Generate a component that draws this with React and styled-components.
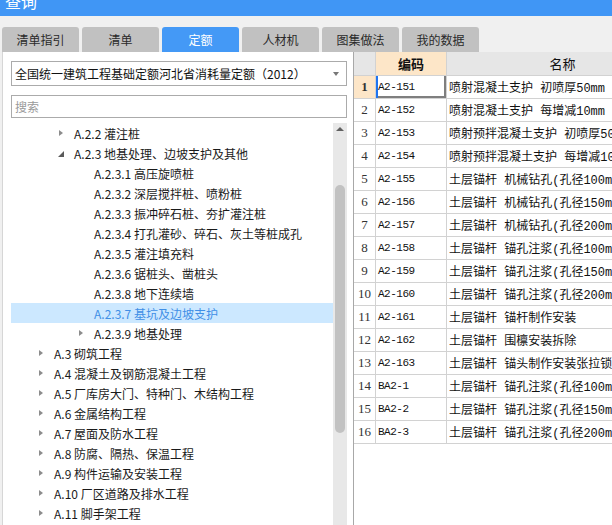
import React from "react";
import styled, { createGlobalStyle } from "styled-components";

const GlobalStyle = createGlobalStyle`
  body {
    margin: 0;
    background: #f0f0f0;
    overflow: hidden;
  }
`;

const Page = styled.div`
  width: 612px;
  height: 525px;
  overflow: hidden;
  display: flex;
  flex-direction: column;
  background: #f0f0f0;
  font-family: "Noto Sans CJK SC", "Liberation Sans", sans-serif;
`;

const TitleBar = styled.div`
  height: 16px;
  flex: none;
  background: #4096f5;
  overflow: hidden;
  padding-left: 5px;
  color: #fff;
  font-size: 16px;
`;

const TitleText = styled.span`
  display: block;
  line-height: 16px;
  margin-top: -7px;
`;

const TabBar = styled.div`
  flex: none;
  display: flex;
  gap: 3px;
  padding: 11px 0 0 2px;
`;

const Tab = styled.div`
  width: 77px;
  height: 25px;
  display: flex;
  align-items: center;
  justify-content: center;
  border-radius: 3px 3px 0 0;
  font-size: 12px;
  background: ${(p) => (p.$active ? "#4499f6" : "#c1c1c1")};
  color: ${(p) => (p.$active ? "#fff" : "#2a2a2a")};
`;

const Content = styled.div`
  flex: 1;
  min-height: 0;
  display: flex;
  padding-left: 2px;
`;

const LeftPanel = styled.div`
  width: 351px;
  box-sizing: border-box;
  background: #fff;
  border-left: 1px solid #d6d6d6;
  padding: 9px 0 0 8px;
  display: flex;
  flex-direction: column;
`;

const Dropdown = styled.div`
  width: 336px;
  height: 25px;
  box-sizing: border-box;
  border: 1px solid #ababab;
  display: flex;
  align-items: center;
  justify-content: space-between;
  padding: 0 7px 0 3px;
  font-size: 12px;
  color: #111;
`;

const DropArrow = styled.span`
  width: 0;
  height: 0;
  border-top: 4px solid #777;
  border-left: 3.5px solid transparent;
  border-right: 3.5px solid transparent;
`;

const Search = styled.input`
  width: 336px;
  height: 23px;
  box-sizing: border-box;
  margin: 9px 0 0;
  border: 1px solid #ababab;
  padding: 0 3px;
  font-family: inherit;
  font-size: 12px;
  outline: none;
  &::placeholder {
    color: #9a9a9a;
  }
`;

const TreeArea = styled.div`
  flex: 1;
  min-height: 0;
  margin-top: 5px;
  display: flex;
  padding-right: 6px;
`;

const TreeList = styled.div`
  flex: 1;
  overflow: hidden;
`;

const TreeRow = styled.div`
  height: 20px;
  display: flex;
  align-items: center;
  padding-left: ${(p) => 5 + p.$level * 20}px;
  font-size: 12px;
  white-space: nowrap;
  background: ${(p) => (p.$selected ? "#cce8ff" : "transparent")};
  color: ${(p) => (p.$selected ? "#3f8fe6" : "#1a1a1a")};
`;

const Slot = styled.span`
  width: 18px;
  height: 20px;
  flex: none;
  display: flex;
  align-items: center;
  justify-content: flex-start;
`;

const Closed = styled.span`
  margin-left: 3px;
  width: 0;
  height: 0;
  border-left: 4px solid #8c8c8c;
  border-top: 3.5px solid transparent;
  border-bottom: 3.5px solid transparent;
`;

const Open = styled.span`
  margin-left: 2px;
  margin-top: 2px;
  width: 0;
  height: 0;
  border-bottom: 6px solid #5a5a5a;
  border-left: 6px solid transparent;
`;

const ScrollTrack = styled.div`
  width: 14px;
  flex: none;
  background: #e8e8e8;
  display: flex;
  flex-direction: column;
  align-items: center;
`;

const ScrollUp = styled.span`
  margin-top: 4px;
  width: 0;
  height: 0;
  border-bottom: 4px solid #606060;
  border-left: 4px solid transparent;
  border-right: 4px solid transparent;
`;

const Thumb = styled.div`
  margin-top: 54px;
  width: 10px;
  height: 248px;
  border-radius: 5px;
  background: #c2c2c2;
`;

const TableArea = styled.div`
  flex: 1;
  min-width: 0;
  background: #fff;
  border-left: 1px solid #a8a8a8;
  overflow: hidden;
`;

const Grid = styled.div`
  display: grid;
  grid-template-columns: 22px 71px 232px;
  grid-auto-rows: 23px;
  grid-template-rows: 24px;
  width: 325px;
`;

const HeadCell = styled.div`
  box-sizing: border-box;
  border-right: 1px solid #d2d2d2;
  border-bottom: 1px solid #d2d2d2;
  background: ${(p) => (p.$hot ? "#fde6c8" : "#e6e6e6")};
  display: flex;
  align-items: center;
  justify-content: center;
  font-size: 13px;
  font-weight: ${(p) => (p.$bold ? 700 : 400)};
  color: #111;
`;

const NumCell = styled.div`
  box-sizing: border-box;
  border-right: 1px solid #d2d2d2;
  border-bottom: 1px solid #d2d2d2;
  background: ${(p) => (p.$hot ? "#fde6c8" : "#fff")};
  display: flex;
  align-items: center;
  justify-content: center;
  font-family: "Liberation Serif", serif;
  font-size: 13px;
  font-weight: ${(p) => (p.$hot ? 700 : 400)};
  color: #333;
`;

const CodeCell = styled.div`
  box-sizing: border-box;
  border-right: 1px solid #d2d2d2;
  border-bottom: 1px solid #d2d2d2;
  display: flex;
  align-items: center;
  padding-left: 2px;
  font-family: "Liberation Mono", monospace;
  font-size: 11px;
  letter-spacing: -0.5px;
  color: #111;
  box-shadow: ${(p) =>
    p.$focus ? "inset 2px 0 0 #1f74f0, inset -2px -2px 0 #7f7f7f" : "none"};
`;

const NameCell = styled.div`
  box-sizing: border-box;
  border-right: 1px solid #d2d2d2;
  border-bottom: 1px solid #d2d2d2;
  display: flex;
  align-items: center;
  padding-left: 2px;
  overflow: hidden;
  white-space: nowrap;
  font-family: "Liberation Mono", "Noto Sans CJK SC", monospace;
  font-size: 12px;
  color: #111;
`;

const tabs = ["清单指引", "清单", "定额", "人材机", "图集做法", "我的数据"];

const tree = [
  { level: 2, state: "closed", text: "A.2.2 灌注桩" },
  { level: 2, state: "open", text: "A.2.3 地基处理、边坡支护及其他" },
  { level: 3, text: "A.2.3.1 高压旋喷桩" },
  { level: 3, text: "A.2.3.2 深层搅拌桩、喷粉桩" },
  { level: 3, text: "A.2.3.3 振冲碎石桩、夯扩灌注桩" },
  { level: 3, text: "A.2.3.4 打孔灌砂、碎石、灰土等桩成孔" },
  { level: 3, text: "A.2.3.5 灌注填充料" },
  { level: 3, text: "A.2.3.6 锯桩头、凿桩头" },
  { level: 3, text: "A.2.3.8 地下连续墙" },
  { level: 3, text: "A.2.3.7 基坑及边坡支护", selected: true },
  { level: 3, state: "closed", text: "A.2.3.9 地基处理" },
  { level: 1, state: "closed", text: "A.3 砌筑工程" },
  { level: 1, state: "closed", text: "A.4 混凝土及钢筋混凝土工程" },
  { level: 1, state: "closed", text: "A.5 厂库房大门、特种门、木结构工程" },
  { level: 1, state: "closed", text: "A.6 金属结构工程" },
  { level: 1, state: "closed", text: "A.7 屋面及防水工程" },
  { level: 1, state: "closed", text: "A.8 防腐、隔热、保温工程" },
  { level: 1, state: "closed", text: "A.9 构件运输及安装工程" },
  { level: 1, state: "closed", text: "A.10 厂区道路及排水工程" },
  { level: 1, state: "closed", text: "A.11 脚手架工程" },
];

const rows = [
  ["A2-151", "喷射混凝土支护 初喷厚50mm"],
  ["A2-152", "喷射混凝土支护 每增减10mm"],
  ["A2-153", "喷射预拌混凝土支护 初喷厚50mm"],
  ["A2-154", "喷射预拌混凝土支护 每增减10mm"],
  ["A2-155", "土层锚杆 机械钻孔(孔径100mm以内)"],
  ["A2-156", "土层锚杆 机械钻孔(孔径150mm以内)"],
  ["A2-157", "土层锚杆 机械钻孔(孔径200mm以内)"],
  ["A2-158", "土层锚杆 锚孔注浆(孔径100mm以内)"],
  ["A2-159", "土层锚杆 锚孔注浆(孔径150mm以内)"],
  ["A2-160", "土层锚杆 锚孔注浆(孔径200mm以内)"],
  ["A2-161", "土层锚杆 锚杆制作安装"],
  ["A2-162", "土层锚杆 围檩安装拆除"],
  ["A2-163", "土层锚杆 锚头制作安装张拉锁定"],
  ["BA2-1", "土层锚杆 锚孔注浆(孔径100mm以内)"],
  ["BA2-2", "土层锚杆 锚孔注浆(孔径150mm以内)"],
  ["BA2-3", "土层锚杆 锚孔注浆(孔径200mm以内)"],
];

function App() {
  return (
    <Page>
      <GlobalStyle />
      <TitleBar>
        <TitleText>查询</TitleText>
      </TitleBar>
      <TabBar>
        {tabs.map((t) => (
          <Tab key={t} $active={t === "定额"}>
            {t}
          </Tab>
        ))}
      </TabBar>
      <Content>
        <LeftPanel>
          <Dropdown>
            <span>全国统一建筑工程基础定额河北省消耗量定额（2012）</span>
            <DropArrow />
          </Dropdown>
          <Search placeholder="搜索" />
          <TreeArea>
            <TreeList>
              {tree.map((n) => (
                <TreeRow key={n.text} $level={n.level} $selected={n.selected}>
                  <Slot>
                    {n.state === "closed" && <Closed />}
                    {n.state === "open" && <Open />}
                  </Slot>
                  {n.text}
                </TreeRow>
              ))}
            </TreeList>
            <ScrollTrack>
              <ScrollUp />
              <Thumb />
            </ScrollTrack>
          </TreeArea>
        </LeftPanel>
        <TableArea>
          <Grid>
            <HeadCell />
            <HeadCell $hot $bold>编码</HeadCell>
            <HeadCell>名称</HeadCell>
            {rows.map(([code, name], i) => (
              <React.Fragment key={code}>
                <NumCell $hot={i === 0}>{i + 1}</NumCell>
                <CodeCell $focus={i === 0}>{code}</CodeCell>
                <NameCell>{name}</NameCell>
              </React.Fragment>
            ))}
          </Grid>
        </TableArea>
      </Content>
    </Page>
  );
}

export default App;
